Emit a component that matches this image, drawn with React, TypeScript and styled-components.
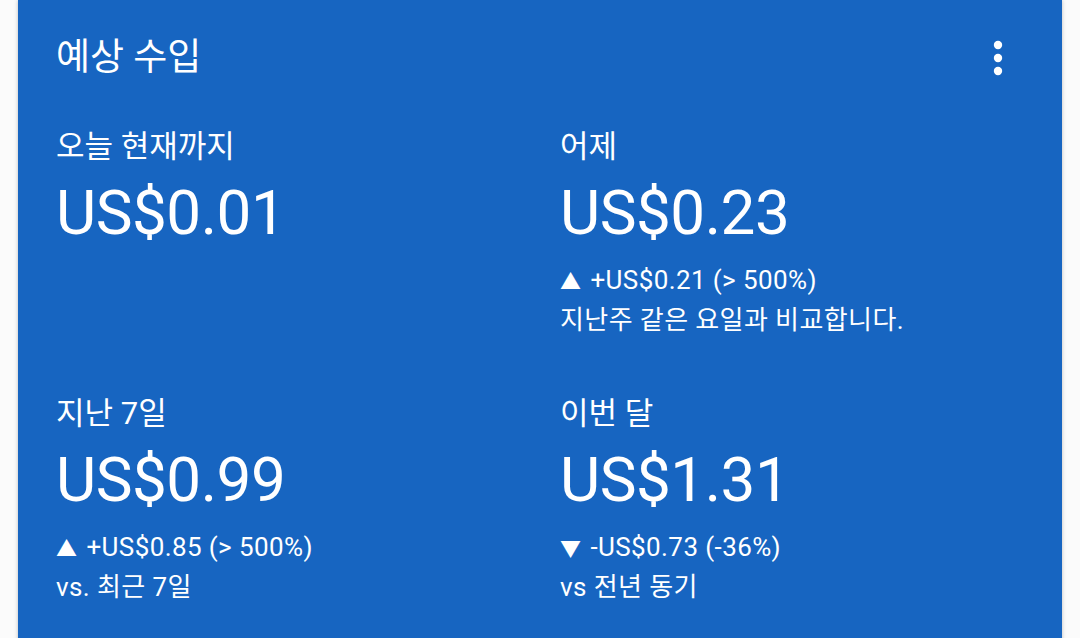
import React from "react";
import styled, { createGlobalStyle } from "styled-components";

const Global = createGlobalStyle`
  html, body { margin: 0; padding: 0; background: #fbfbfb; overflow: hidden; }
  body { font-family: Roboto, "Noto Sans CJK KR", sans-serif; }
`;

const Page = styled.div`
  width: 1080px;
  height: 638px;
  padding: 0 18px;
  box-sizing: border-box;
`;

const Card = styled.section`
  background: #1765c1;
  color: #ffffff;
  height: 660px;
  box-shadow: 0 0 4px rgba(0, 0, 0, 0.25);
  padding: 36px 38px 0 38px;
  box-sizing: border-box;
`;

const Header = styled.header`
  display: flex;
  align-items: center;
  justify-content: space-between;
  height: 44px;
`;

const Title = styled.h1`
  margin: 0;
  font-family: Roboto, "Noto Sans CJK KR", sans-serif;
  font-size: 37px;
  font-weight: 400;
  line-height: 44px;
`;

const MoreButton = styled.button`
  background: none;
  border: none;
  padding: 0;
  margin-right: 12px;
  width: 28px;
  height: 44px;
  display: flex;
  align-items: center;
  justify-content: center;
  color: #fff;
`;

const Grid = styled.div`
  display: grid;
  grid-template-columns: 1fr 1fr;
  column-gap: 40px;
  margin-top: 48px;
`;

const Cell = styled.div`
  display: flex;
  flex-direction: column;
  height: 267px;
`;

const Label = styled.div`
  font-family: Roboto, "Noto Sans CJK KR", sans-serif;
  font-size: 31px;
  line-height: 38px;
`;

const Value = styled.div`
  font-family: Roboto, "Noto Sans CJK KR", sans-serif;
  font-size: 62px;
  line-height: 70px;
  margin-top: 12px;
  letter-spacing: -0.5px;
`;

const Note = styled.div`
  font-family: Roboto, "Noto Sans CJK KR", sans-serif;
  font-size: 26px;
  line-height: 38px;
  letter-spacing: 0.4px;
`;

const Delta = styled(Note)`
  margin-top: 13px;
`;

const Arrow = styled.span`
  font-size: 21px;
  margin-right: 9px;
`;

type Item = {
  label: string;
  value: string;
  arrow?: "up" | "down";
  delta?: string;
  compare?: string;
};

const items: Item[] = [
  { label: "오늘 현재까지", value: "US$0.01" },
  {
    label: "어제",
    value: "US$0.23",
    arrow: "up",
    delta: "+US$0.21 (> 500%)",
    compare: "지난주 같은 요일과 비교합니다.",
  },
  {
    label: "지난 7일",
    value: "US$0.99",
    arrow: "up",
    delta: "+US$0.85 (> 500%)",
    compare: "vs. 최근 7일",
  },
  {
    label: "이번 달",
    value: "US$1.31",
    arrow: "down",
    delta: "-US$0.73 (-36%)",
    compare: "vs 전년 동기",
  },
];

export default function App() {
  return (
    <Page>
      <Global />
      <Card>
        <Header>
          <Title>예상 수입</Title>
          <MoreButton aria-label="more">
            <svg width="10" height="36" viewBox="0 0 10 36">
              <circle cx="5" cy="5" r="4.2" fill="#fff" />
              <circle cx="5" cy="18" r="4.2" fill="#fff" />
              <circle cx="5" cy="31" r="4.2" fill="#fff" />
            </svg>
          </MoreButton>
        </Header>
        <Grid>
          {items.map((it) => (
            <Cell key={it.label}>
              <Label>{it.label}</Label>
              <Value>{it.value}</Value>
              {it.delta && (
                <Delta>
                  <Arrow>{it.arrow === "up" ? "▲" : "▼"}</Arrow>
                  {it.delta}
                </Delta>
              )}
              {it.compare && <Note>{it.compare}</Note>}
            </Cell>
          ))}
        </Grid>
      </Card>
    </Page>
  );
}
